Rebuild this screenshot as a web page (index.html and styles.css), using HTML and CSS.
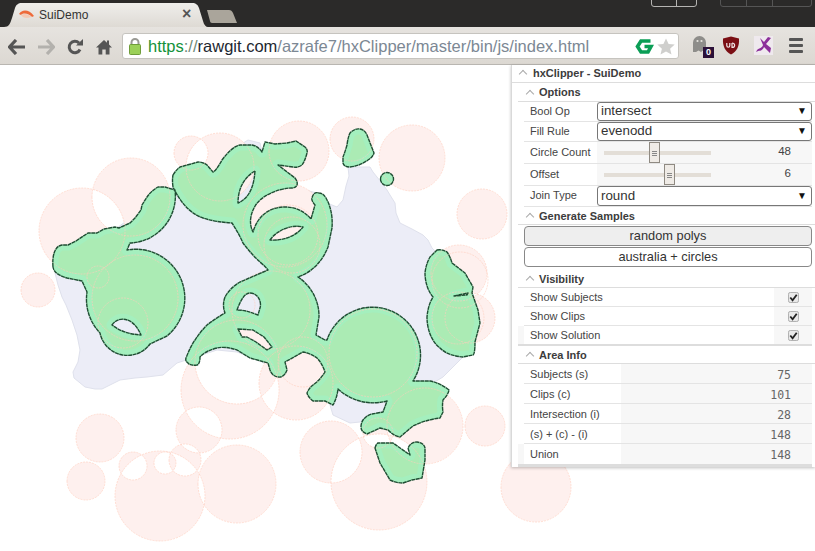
FILE: index.html
```html
<!DOCTYPE html>
<html lang="en">
<head>
<meta charset="utf-8">
<title>SuiDemo</title>
<link rel="stylesheet" href="styles.css">
</head>
<body>
<div class="browser">
  <header class="tabstrip">
    <div class="tab">
      <svg class="tab-shape" width="204" height="24" viewBox="0 0 204 24"><defs><linearGradient id="tabg" x1="0" y1="0" x2="0" y2="1"><stop offset="0" stop-color="#efeeeb"/><stop offset="1" stop-color="#dedad4"/></linearGradient></defs><path d="M0 24 C5 24 6 21 8 15 L11 5 C12 2 14 0 18 0 H188 C192 0 194 2 195 5 L199 18 C200 22 202 24 204 24 Z" fill="url(#tabg)"/></svg>
      <svg class="favicon" width="16" height="10" viewBox="0 0 16 10"><path d="M0 5 C3 0 10 0 15 7 L13 8 C10 5 5 3 2 6 Z" fill="#ee6a3a"/><path d="M2 6 C5 4 9 5 13 8 L8 9 C5 9 3 8 2 6 Z" fill="#f4c9b4"/></svg>
      <span class="tab-title">SuiDemo</span>
      <span class="tab-close">×</span>
    </div>
    <svg class="newtab" width="32" height="15" viewBox="0 0 32 15"><path d="M1 1 H23 C25 1 26 2 27 4 L31 14 H6 C5 14 4 13 4 12 Z" fill="#aaa59b"/></svg>
    <div class="winbtns winbtns-a"><span></span><span></span></div>
    <div class="winbtns winbtns-b"><span></span><span></span><span></span></div>
  </header>
  <nav class="toolbar">
    <svg class="tb-icon tb-back" width="18" height="16" viewBox="0 0 18 16"><path d="M8 1 L1.500 8 L8 15 M2 8 H17" fill="none" stroke="#555" stroke-width="3.2"/></svg>
    <svg class="tb-icon tb-fwd" width="18" height="16" viewBox="0 0 18 16"><path d="M10 1 L16.500 8 L10 15 M16 8 H1" fill="none" stroke="#b3b1ad" stroke-width="3.2"/></svg>
    <svg class="tb-icon tb-reload" width="16" height="16" viewBox="0 0 16 16"><path d="M13 10.500 A5.700 5.700 0 1 1 12 4" fill="none" stroke="#555" stroke-width="3"/><path d="M9 6.500 H16 V0 Z" fill="#555"/></svg>
    <svg class="tb-icon tb-home" width="16" height="16" viewBox="0 0 16 16"><path d="M8 1 L0 8.500 H2.500 V15.500 H6.300 V10.500 H9.700 V15.500 H13.500 V8.500 H16 L13 5.600 V1.500 H11 V3.700 Z" fill="#555"/></svg>
    <div class="omnibox">
      <svg class="lock" width="12" height="17" viewBox="0 0 12 17"><path d="M2.500 7 V4.500 A3.500 3.500 0 0 1 9.500 4.500 V7" fill="none" stroke="#9a9a94" stroke-width="2"/><rect x="0.500" y="6.500" width="11" height="10" rx="1" fill="#9bd058" stroke="#6f9c3a"/></svg>
      <span class="url"><span class="u-scheme">https</span><span class="u-sep">://</span><span class="u-host">rawgit.com</span><span class="u-path">/azrafe7/hxClipper/master/bin/js/index.html</span></span>
      <svg class="om-g" width="19" height="17" viewBox="0 0 19 17"><path d="M15.500 3 H6 L2.500 8.500 L6 14 H13 L16 8.500 H9.500" fill="none" stroke="#0b9e56" stroke-width="3.600"/></svg>
      <svg class="om-star" width="18" height="17" viewBox="0 0 18 17"><path d="M9 0.500 L11.600 6 L17.700 6.600 L13.100 10.700 L14.500 16.600 L9 13.500 L3.500 16.600 L4.900 10.700 L0.300 6.600 L6.400 6 Z" fill="#cfcfcd"/></svg>
    </div>
    <div class="ext ext-ghost">
      <svg width="15" height="18" viewBox="0 0 15 18"><path d="M1 17 V7.500 A6.500 6.500 0 0 1 14 7.500 V17 L11 15.500 L9 17 L6.500 15.500 L4 17 Z" fill="#8e8d8a"/><circle cx="5.500" cy="6" r="1.100" fill="#e6e3de"/><circle cx="9.500" cy="6" r="1.100" fill="#e6e3de"/></svg>
      <span class="ghost-badge">0</span>
    </div>
    <svg class="ext ext-shield" width="18" height="19" viewBox="0 0 18 19"><path d="M9 0.500 L17 2.500 C17.500 10 15 15.500 9 18.500 C3 15.500 0.500 10 1 2.500 Z" fill="#7b0f14"/><path d="M4.800 7 V9.500 C4.800 11.800 7.800 11.800 7.800 9.500 V7 M10 7 V11.500 C13.500 11.500 13.500 7 10 7" fill="none" stroke="#f2e6e6" stroke-width="1.200"/></svg>
    <svg class="ext ext-stylish" width="19" height="19" viewBox="0 0 19 19"><rect width="19" height="19" fill="#efe9ee"/><path d="M2 16 C4 11 8 13 9 9 L6 2 L10 6 L14 1 L17 2 L12 8 L17 12 L16 17 L10 11 C8 16 5 14 2 16 Z" fill="#8c2f9a"/></svg>
    <div class="hamburger"><span></span><span></span><span></span></div>
  </nav>
  <main class="viewport">
    <svg class="stage" width="815" height="486" viewBox="0 65 815 486">
      <defs>
        <path id="sol" fill-rule="evenodd" d="M53 267 C52 255 55 246 62 245 L68 245 L76 241 L88 233 L97 233 L104 229 L115 227 L119 228 L130 223 L135 218 L141 210 L142 205 L147 197 Q151 191 158 187 L165 187 L175 190 A47 47 0 0 1 130 243 L127 250 A49 49 0 0 1 167 336 L150 344 A28 28 0 0 1 100 333 A49 49 0 0 1 87 292 L82 281 L67 278 C60 276 54 273 53 267 Z
        M112 325 C118 316 133 316 141 335 C128 334 120 331 112 325 Z
        M173 175 Q176 170 180 167 L198 162 Q203 162 207 165 L213 172 Q216 171 222 160 C228 152 234 146 240 145 L252 145 Q258 146 262 152 L265 142 L275 144 L287 143 L296 141 L305 147 Q308 150 307 153 Q305 161 302 165 Q298 168 293 167 L278 165 L295 178 Q298 182 297 185 Q296 188 292 188 C280 188 260 195 254 208 C249 218 250 226 253 232 C258 215 270 207 285 207 C297 207 305 212 311 219 L315 205 Q311 200 312 198 C313 193 316 192 319 193 Q323 193 326 198 C330 205 333 215 332 228 L328 247 C322 262 312 272 298 277 A47 47 0 0 1 319 317 L316 335 L325 340 L327 340 A48 48 0 1 1 413 381 L430 381 Q440 383 449 390 Q448 395 443 400 Q442 406 443 412 L440 418 Q425 420 413 426 L400 437 Q394 436 388 430 L380 428 L367 434 Q361 432 361 427 Q361 423 363 420 Q367 415 372 414 L383 412 L387 401 A52 52 0 0 1 338 389 Q337 398 333 405 Q329 403 325 401 L313 401 Q308 397 307 393 Q309 388 313 385 Q320 380 325 372 Q322 363 317 358 Q310 353 303 352 L285 362 L287 370 Q284 378 278 377 Q272 376 270 370 L268 363 L250 358 L237 350 Q225 346 217 348 Q205 351 200 357 Q200 364 197 365 Q190 366 188 363 Q185 361 186 358 Q189 350 193 343 Q200 332 207 325 Q215 319 225 313 Q222 305 225 297 Q230 288 240 282 L268 270 Q265 266 260 262 Q252 255 243 243 Q238 232 232 223 Q215 222 203 218 Q185 212 173 187 Q172 180 173 175 Z
        M255 171 C243 178 238 190 238 203 C250 198 254 185 255 171 Z
        M270 240 C277 230 292 224 303 227 C297 235 285 241 270 240 Z
        M237 310 C240 302 244 293 250 293 C258 293 262 302 260 308 L258 315 C250 312 245 310 237 310 Z
        M238 329 L253 330 L264 337 L272 347 L267 350 L256 342 L247 337 L242 337 Z
        M343 157 Q345 152 347 145 Q348 137 350 133 Q355 128 360 129 Q365 130 367 135 L374 153 Q373 157 368 160 Q360 166 350 167 Q344 167 343 163 Z
        M380.500 179 A6.500 6.500 0 1 0 393.500 179 A6.500 6.500 0 1 0 380.500 179 Z
        M437 250 Q442 249 447 252 Q450 256 452 263 L465 273 L473 287 L472 293 L478 310 L480 323 L475 342 Q475 354 473 355 L463 357 C452 356 445 353 440 348 C432 342 427 330 427 317 Q428 305 433 297 C427 290 425 280 425 273 Q426 264 430 257 Z
        M454 296 L468 293 L467 295 Z
        M375 448 Q376 444 378 443 L393 443 L410 455 L408 448 Q411 442 417 442 Q424 443 425 448 L425 460 L422 478 L412 480 L403 483 Q396 483 390 480 L380 463 Z"/>
        <clipPath id="solclip"><use href="#sol" clip-rule="evenodd"/></clipPath>
        <path id="clips" d="M39 231 a43 43 0 1 0 86 0 a43 43 0 1 0 -86 0 Z M92 197 a39 39 0 1 0 78 0 a39 39 0 1 0 -78 0 Z M21 290 a17 17 0 1 0 34 0 a17 17 0 1 0 -34 0 Z M174 153 a17 17 0 1 0 34 0 a17 17 0 1 0 -34 0 Z M186 167 a34 34 0 1 0 68 0 a34 34 0 1 0 -68 0 Z M269 151 a30 30 0 1 0 60 0 a30 30 0 1 0 -60 0 Z M330 139 a22 22 0 1 0 44 0 a22 22 0 1 0 -44 0 Z M379 158 a33 33 0 1 0 66 0 a33 33 0 1 0 -66 0 Z M457 214 a25 25 0 1 0 50 0 a25 25 0 1 0 -50 0 Z M431 273 a28 28 0 1 0 56 0 a28 28 0 1 0 -56 0 Z M445 318 a25 25 0 1 0 50 0 a25 25 0 1 0 -50 0 Z M243 225 a42 42 0 1 0 84 0 a42 42 0 1 0 -84 0 Z M76 438 a24 24 0 1 0 48 0 a24 24 0 1 0 -48 0 Z M67 481 a19 19 0 1 0 38 0 a19 19 0 1 0 -38 0 Z M119 466 a14 14 0 1 0 28 0 a14 14 0 1 0 -28 0 Z M115 496 a45 45 0 1 0 90 0 a45 45 0 1 0 -90 0 Z M154 463 a11 11 0 1 0 22 0 a11 11 0 1 0 -22 0 Z M169 460 a16 16 0 1 0 32 0 a16 16 0 1 0 -32 0 Z M176 430 a23 23 0 1 0 46 0 a23 23 0 1 0 -46 0 Z M198 484 a39 39 0 1 0 78 0 a39 39 0 1 0 -78 0 Z M181 390 a49 49 0 1 0 98 0 a49 49 0 1 0 -98 0 Z M195 362 a42 42 0 1 0 84 0 a42 42 0 1 0 -84 0 Z M259 383 a37 37 0 1 0 74 0 a37 37 0 1 0 -74 0 Z M300 452 a31 31 0 1 0 62 0 a31 31 0 1 0 -62 0 Z M331 482 a48 48 0 1 0 96 0 a48 48 0 1 0 -96 0 Z M387 426 a38 38 0 1 0 76 0 a38 38 0 1 0 -76 0 Z M465 426 a20 20 0 1 0 40 0 a20 20 0 1 0 -40 0 Z M501 487 a35 35 0 1 0 70 0 a35 35 0 1 0 -70 0 Z M363 433 a15 15 0 1 0 30 0 a15 15 0 1 0 -30 0 Z M92 298 a43 43 0 1 0 86 0 a43 43 0 1 0 -86 0 Z M87 277 a11 11 0 1 0 22 0 a11 11 0 1 0 -22 0 Z M98 323 a25 25 0 1 0 50 0 a25 25 0 1 0 -50 0 Z M329 353 a44 44 0 1 0 88 0 a44 44 0 1 0 -88 0 Z M232 310 a39 39 0 1 0 78 0 a39 39 0 1 0 -78 0 Z M258 235 a30 30 0 1 0 60 0 a30 30 0 1 0 -60 0 Z M264 245 a28 28 0 1 0 56 0 a28 28 0 1 0 -56 0 Z M229 305 a13 13 0 1 0 26 0 a13 13 0 1 0 -26 0 Z M278 362 a25 25 0 1 0 50 0 a25 25 0 1 0 -50 0 Z M432 280 a28 28 0 1 0 56 0 a28 28 0 1 0 -56 0 Z M432 318 a26 26 0 1 0 52 0 a26 26 0 1 0 -52 0 Z"/>
      </defs>
      <path class="land" d="M55 273 L58 285 L62 297 L66 305 L72 320 L77 335 L80 350 L78 362 L73 372 L74 378 L85 387 L95 389 L102 389 L112 384 L120 380 L135 378 L147 377 L163 375 L170 369 L177 363 L217 350 L237 352 L262 362 L283 377 L285 386 L291 385 L299 378 L307 363 L305 372 L302 381 L310 383 L320 388 L327 396 L330 405 L333 415 L350 423 L360 422 L383 413 L443 377 L467 353 L478 310 L470 285 L432 248 L428 240 L423 235 L412 229 L400 223 L396 213 L395 203 L390 195 L387 190 L381 182 L373 172 L370 167 L348 167 L349 176 L346 186 L343 200 L337 207 L327 203 L317 193 L305 190 L297 188 L262 152 L260 143 L248 140 L173 187 Z"/>
      <path class="clip-fill" fill-rule="evenodd" d="M39 231 a43 43 0 1 0 86 0 a43 43 0 1 0 -86 0 Z M92 197 a39 39 0 1 0 78 0 a39 39 0 1 0 -78 0 Z M21 290 a17 17 0 1 0 34 0 a17 17 0 1 0 -34 0 Z M174 153 a17 17 0 1 0 34 0 a17 17 0 1 0 -34 0 Z M186 167 a34 34 0 1 0 68 0 a34 34 0 1 0 -68 0 Z M269 151 a30 30 0 1 0 60 0 a30 30 0 1 0 -60 0 Z M330 139 a22 22 0 1 0 44 0 a22 22 0 1 0 -44 0 Z M379 158 a33 33 0 1 0 66 0 a33 33 0 1 0 -66 0 Z M457 214 a25 25 0 1 0 50 0 a25 25 0 1 0 -50 0 Z M431 273 a28 28 0 1 0 56 0 a28 28 0 1 0 -56 0 Z M445 318 a25 25 0 1 0 50 0 a25 25 0 1 0 -50 0 Z M243 225 a42 42 0 1 0 84 0 a42 42 0 1 0 -84 0 Z M76 438 a24 24 0 1 0 48 0 a24 24 0 1 0 -48 0 Z M67 481 a19 19 0 1 0 38 0 a19 19 0 1 0 -38 0 Z M119 466 a14 14 0 1 0 28 0 a14 14 0 1 0 -28 0 Z M115 496 a45 45 0 1 0 90 0 a45 45 0 1 0 -90 0 Z M154 463 a11 11 0 1 0 22 0 a11 11 0 1 0 -22 0 Z M169 460 a16 16 0 1 0 32 0 a16 16 0 1 0 -32 0 Z M176 430 a23 23 0 1 0 46 0 a23 23 0 1 0 -46 0 Z M198 484 a39 39 0 1 0 78 0 a39 39 0 1 0 -78 0 Z M181 390 a49 49 0 1 0 98 0 a49 49 0 1 0 -98 0 Z M195 362 a42 42 0 1 0 84 0 a42 42 0 1 0 -84 0 Z M259 383 a37 37 0 1 0 74 0 a37 37 0 1 0 -74 0 Z M300 452 a31 31 0 1 0 62 0 a31 31 0 1 0 -62 0 Z M331 482 a48 48 0 1 0 96 0 a48 48 0 1 0 -96 0 Z M387 426 a38 38 0 1 0 76 0 a38 38 0 1 0 -76 0 Z M465 426 a20 20 0 1 0 40 0 a20 20 0 1 0 -40 0 Z M501 487 a35 35 0 1 0 70 0 a35 35 0 1 0 -70 0 Z M363 433 a15 15 0 1 0 30 0 a15 15 0 1 0 -30 0 Z"/>
      <use href="#sol" class="sol-fill"/>
      <use href="#sol" class="sol-band" clip-path="url(#solclip)"/>
      <use href="#clips" class="clip-line"/>
      <use href="#sol" class="sol-line"/>
    </svg>
    <aside class="panel">
      <div class="title-row"><span class="chev"></span><span>hxClipper - SuiDemo</span></div>
      <section class="group">
        <div class="head head-options"><span class="chev"></span><span>Options</span></div>
        <div class="row row-20"><span class="label">Bool Op</span><span class="select">intersect<i>▼</i></span></div>
        <div class="row row-20"><span class="label">Fill Rule</span><span class="select">evenodd<i>▼</i></span></div>
        <div class="row row-22"><span class="label">Circle Count</span><div class="slide-cell"><div class="track"><b class="knob knob-a"></b></div><span class="num">48</span></div></div>
        <div class="row row-22"><span class="label">Offset</span><div class="slide-cell"><div class="track"><b class="knob knob-b"></b></div><span class="num">6</span></div></div>
        <div class="row row-21"><span class="label">Join Type</span><span class="select">round<i>▼</i></span></div>
      </section>
      <section class="group">
        <div class="head"><span class="chev"></span><span>Generate Samples</span></div>
        <div class="buttons">
          <span class="btn btn-on">random polys</span>
          <span class="btn">australia + circles</span>
        </div>
      </section>
      <section class="group">
        <div class="head"><span class="chev"></span><span>Visibility</span></div>
        <div class="row row-19"><span class="label label-wide">Show Subjects</span><span class="check-cell"><svg class="check" width="12" height="12" viewBox="0 0 12 12"><rect x="0.500" y="0.500" width="11" height="11" rx="2"/><path d="M2.500 6 L5 9 L9.500 3"/></svg></span></div>
        <div class="row row-19"><span class="label label-wide">Show Clips</span><span class="check-cell"><svg class="check" width="12" height="12" viewBox="0 0 12 12"><rect x="0.500" y="0.500" width="11" height="11" rx="2"/><path d="M2.500 6 L5 9 L9.500 3"/></svg></span></div>
        <div class="row row-19 row-last"><span class="label label-wide">Show Solution</span><span class="check-cell"><svg class="check" width="12" height="12" viewBox="0 0 12 12"><rect x="0.500" y="0.500" width="11" height="11" rx="2"/><path d="M2.500 6 L5 9 L9.500 3"/></svg></span></div>
      </section>
      <section class="group">
        <div class="head"><span class="chev"></span><span>Area Info</span></div>
        <div class="row row-20"><span class="label label-area">Subjects (s)</span><span class="mono">75</span></div>
        <div class="row row-20"><span class="label label-area">Clips (c)</span><span class="mono">101</span></div>
        <div class="row row-20"><span class="label label-area">Intersection (i)</span><span class="mono">28</span></div>
        <div class="row row-20"><span class="label label-area">(s) + (c) - (i)</span><span class="mono">148</span></div>
        <div class="row row-20 row-end"><span class="label label-area">Union</span><span class="mono">148</span></div>
      </section>
    </aside>
  </main>
</div>
</body>
</html>
```
FILE: styles.css
```css
* { box-sizing: border-box; }
html, body { margin: 0; height: 100%; overflow: hidden; background: #fff; }
body { font-family: "Liberation Sans", Arial, sans-serif; }
.browser { display: flex; flex-direction: column; width: 815px; height: 551px; }

.tabstrip { position: relative; flex: 0 0 27px; height: 27px; background: #2b2a29; display: flex; align-items: flex-end; padding-left: 4px; }
.tab { position: relative; width: 204px; height: 24px; display: flex; align-items: center; }
.tab-shape { position: absolute; left: 0; top: 0; }
.favicon { position: relative; margin-left: 15px; margin-top: -2px; }
.tab-title { position: relative; margin-left: 4px; font-size: 12px; color: #333; margin-top: -1px; }
.tab-close { position: absolute; left: 178px; top: 2px; font-size: 16px; font-weight: bold; color: #555; line-height: 18px; }
.newtab { margin-left: -2px; margin-bottom: 3px; }
.winbtns { position: absolute; top: -6px; height: 13px; display: flex; border: 1px solid #8d8c8a; border-radius: 3px; }
.winbtns span { border-right: 1px solid #8d8c8a; }
.winbtns span:last-child { border-right: 0; }
.winbtns-a { left: 651px; width: 46px; border-color: #b5b4b2; }
.winbtns-a span { width: 26px; border-color: #b5b4b2; }
.winbtns-a span:last-child { width: 20px; }
.winbtns-b { left: 720px; width: 92px; border-color: #555; }
.winbtns-b span { width: 26px; border-color: #555; }
.winbtns-b span:last-child { width: 38px; }

.toolbar { flex: 0 0 38px; height: 38px; background: linear-gradient(#e6e3df, #dcd8d2); border-bottom: 1px solid #b9b6b1; display: flex; align-items: center; position: relative; }
.tb-icon { flex: none; margin-top: 2px; }
.tb-back { margin-left: 8px; }
.tb-fwd { margin-left: 11px; }
.tb-reload { margin-left: 12px; }
.tb-home { margin-left: 13px; }
.omnibox { margin-left: 10px; width: 557px; height: 26px; background: #fff; border: 1px solid #c6c4bf; border-radius: 3px; display: flex; align-items: center; margin-top: 1px; }
.lock { margin-left: 6px; flex: none; }
.url { margin-left: 7px; font-size: 16.5px; white-space: nowrap; width: 487px; font-family: "Liberation Sans", Arial, sans-serif; }
.u-scheme { color: #14923a; }
.u-sep { color: #6f8a78; }
.u-host { color: #1d2730; }
.u-path { color: #7c8894; }
.om-g { flex: none; }
.om-star { flex: none; margin-left: 3px; }
.ext { flex: none; }
.ext-ghost { position: relative; margin-left: 13px; width: 18px; height: 21px; }
.ghost-badge { position: absolute; left: 11px; top: 12px; width: 11px; height: 11px; background: #2b1038; color: #fff; font-size: 9px; font-weight: bold; line-height: 11px; text-align: center; }
.ext-shield { margin-left: 12px; }
.ext-stylish { margin-left: 14px; }
.hamburger { margin-left: 16px; display: flex; flex-direction: column; gap: 3px; width: 14px; }
.hamburger span { height: 3px; background: #555; border-radius: 1px; }

.viewport { position: relative; flex: 1; min-height: 0; background: #fff; }
.stage { display: block; }
.land { fill: #ecedf7; stroke: #dfe1ec; stroke-width: 1; }
.clip-fill { fill: #fef0ee; stroke: none; }
.clip-line { fill: none; stroke: #ffcdbc; stroke-opacity: .6; stroke-width: 1; stroke-dasharray: 2 1; }
.sol-fill { fill: #abebb4; }
.sol-band { fill: none; stroke: #a4efbe; stroke-width: 11; stroke-linejoin: round; }
.sol-line { fill: none; stroke: #1f4d33; stroke-width: 1.4; stroke-linejoin: round; stroke-dasharray: 4 .5; }

.panel { position: absolute; left: 511px; top: 0; width: 304px; height: 402px; background: #fff; border-left: 1px solid #d9d9d9; box-shadow: 0 1px 3px rgba(0,0,0,.25); color: #444; font-size: 11px; padding-right: 3px; display: flex; flex-direction: column; }
.title-row { height: 18px; margin-right: -3px; display: flex; align-items: center; border-bottom: 1px solid #ddd; font-weight: bold; color: #3c3c3c; padding: 0 0 2px 6px; gap: 6px; flex: none; }
.chev { display: block; width: 9px; height: 5px; border: 0; position: relative; flex: none; }
.chev::before { content: ""; position: absolute; left: 2px; top: 1px; width: 5px; height: 5px; border-left: 1px solid #aaa; border-top: 1px solid #aaa; transform: rotate(45deg); }
.group { margin-left: 6px; flex: none; }
.head { height: 18px; display: flex; align-items: center; gap: 5px; padding-left: 7px; font-weight: bold; color: #3c3c3c; border-bottom: 1px solid #ddd; margin-right: -3px; background: #fff; }
.head-options { height: 19px; }
.row { margin-left: 6px; display: flex; align-items: center; border-bottom: 1px solid #e4e4e4; background: #f7f7f7; }
.row-19 { height: 19px; }
.row-20 { height: 20px; }
.row-21 { height: 21px; }
.row-22 { height: 22px; }
.row-last { height: 20px; border-bottom: 2px solid #ddd; margin-left: 0; padding-left: 6px; }
.row-end { border-bottom: 3px solid #ddd; height: 23px; margin-left: 0; padding-left: 6px; }
.label { flex: none; width: 73px; height: 100%; background: #fff; padding-left: 6px; display: flex; align-items: center; font-size: 11px; color: #444; white-space: nowrap; }
.head-options ~ .row .label { padding-bottom: 2px; }
.label-wide { width: 250px; }
.label-area { width: 97px; }
.select { flex: 1; height: 100%; background: #fff; border: 1px solid #777; border-radius: 3px; font-size: 13.33px; color: #333; padding: 0 0 2px 3px; display: flex; align-items: center; justify-content: space-between; }
.select i { font-style: normal; font-size: 10px; color: #111; padding-right: 4px; }
.slide-cell { flex: 1; height: 100%; display: flex; align-items: center; position: relative; }
.track { position: relative; margin-left: 7px; width: 107px; height: 4px; background: #e3ded7; }
.knob { position: absolute; top: -9px; width: 11px; height: 21px; background: #efebe6 repeating-linear-gradient(#888 0 1px, transparent 1px 2px) center 8px / 5px 5px no-repeat; border: 1px solid #8f8a82; }
.knob-a { left: 45px; }
.knob-b { left: 60px; }
.num { position: absolute; right: 21px; top: 3px; font-size: 11.5px; color: #444; }
.buttons { margin-left: 6px; padding: 1px 0 3px; display: flex; flex-direction: column; gap: 1px; background: #fff; }
.btn { height: 20px; border: 1px solid #888; border-radius: 4px; background: #fff; text-align: center; font-size: 12.8px; line-height: 17px; color: #333; }
.btn-on { background: #eee; }
.check-cell { flex: 1; height: 100%; display: flex; align-items: center; padding-left: 14px; }
.check { width: 11px; height: 11px; }
.check rect { fill: #e9e9e9; stroke: #a8a8a8; }
.check path { fill: none; stroke: #222; stroke-width: 2; }
.mono { flex: 1; text-align: right; padding: 2px 21px 0 0; font-family: "DejaVu Sans Mono", "Liberation Mono", monospace; font-size: 11.5px; color: #666; }
```
